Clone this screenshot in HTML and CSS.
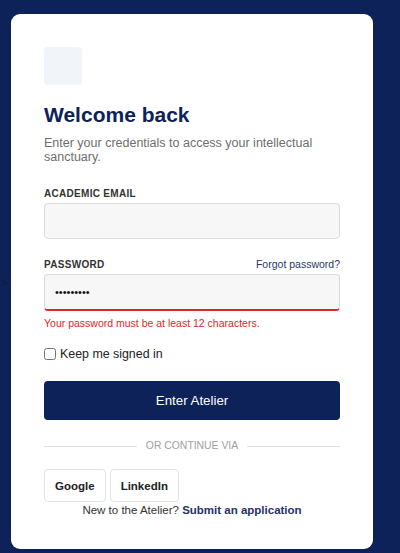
FILE: index.html
```html
<!DOCTYPE html>
<html lang="en">
<head>
<meta charset="utf-8">
<title>Welcome back</title>
<link rel="stylesheet" href="styles.css">
</head>
<body>
<span class="stray">&gt;</span>
<main class="card">
  <div class="logo"></div>
  <h1 class="title">Welcome back</h1>
  <p class="subtitle">Enter your credentials to access your intellectual sanctuary.</p>

  <form class="form">
    <div class="field">
      <label class="label" for="email">Academic Email</label>
      <input class="input" id="email" type="email">
    </div>

    <div class="field field-pw">
      <div class="label-row">
        <label class="label" for="pw">Password</label>
        <a class="forgot" href="#">Forgot password?</a>
      </div>
      <input class="input input-error" id="pw" type="password" value="password1">
      <p class="error">Your password must be at least 12 characters.</p>
    </div>

    <label class="remember"><input type="checkbox" class="check"> Keep me signed in</label>

    <button type="button" class="submit">Enter Atelier</button>
  </form>

  <div class="divider"><span>OR CONTINUE VIA</span></div>

  <div class="socials">
    <button type="button" class="social">Google</button>
    <button type="button" class="social">LinkedIn</button>
  </div>

  <p class="footer">New to the Atelier? <a href="#" class="apply">Submit an application</a></p>
</main>
</body>
</html>
```

FILE: styles.css
```css
* { box-sizing: border-box; }

html, body {
  margin: 0;
}

body {
  background: #0c2259;
  font-family: "Liberation Sans", Arial, sans-serif;
  padding: 14px 27px 4px 11px;
  min-height: 553px;
  position: relative;
}

.stray {
  position: absolute;
  left: 1px;
  top: 276px;
  color: #161a33;
  font-size: 12px;
  line-height: 14px;
}

.card {
  background: #ffffff;
  border-radius: 9px;
  padding: 33px 33px 31px;
  min-height: 535px;
  display: flex;
  flex-direction: column;
}

.card > * { flex-shrink: 0; }

.logo {
  width: 38px;
  height: 38px;
  background: #f1f4f9;
  border-radius: 4px;
}

.title {
  margin: 17px 0 0;
  font-size: 21px;
  line-height: 25px;
  font-weight: 700;
  color: #0e2259;
}

.subtitle {
  margin: 9px 0 0;
  font-size: 12.5px;
  line-height: 14px;
  color: #6e6e6e;
}

.form {
  display: flex;
  flex-direction: column;
  margin-top: 24px;
}

.field {
  display: flex;
  flex-direction: column;
}

.label {
  font-size: 10px;
  line-height: 12px;
  font-weight: 700;
  color: #333333;
  text-transform: uppercase;
  letter-spacing: 0.3px;
}

.label-row {
  display: flex;
  justify-content: space-between;
  align-items: baseline;
}

.forgot {
  font-size: 10.5px;
  line-height: 12px;
  color: #2b3a6e;
  text-decoration: none;
}

.input {
  margin-top: 3px;
  height: 36px;
  width: 100%;
  background: #f7f7f7;
  border: 1px solid #dcdcdc;
  border-radius: 4px;
  padding: 0 10px;
  font-family: inherit;
  font-size: 11px;
  color: #111;
}

.input-error {
  margin-top: 3px;
  height: 37px;
  border-bottom: 2px solid #e0262a;
}

.field-pw {
  margin-top: 19px;
}

.error {
  margin: 6px 0 0;
  font-size: 10.5px;
  line-height: 12px;
  color: #e5262a;
}

.remember {
  margin-top: 18px;
  display: flex;
  align-items: center;
  gap: 4px;
  font-size: 12.4px;
  line-height: 14px;
  color: #222;
}

.check {
  margin: 0;
  width: 12px;
  height: 12px;
}

.submit {
  margin-top: 20px;
  height: 39px;
  background: #0c2259;
  color: #ffffff;
  border: 0;
  border-radius: 4px;
  font-family: inherit;
  font-size: 13.3px;
}

.divider {
  margin-top: 20px;
  display: flex;
  align-items: center;
  gap: 9px;
  color: #a0a0a0;
  font-size: 10.4px;
  line-height: 12px;
}

.divider::before,
.divider::after {
  content: "";
  flex: 1;
  height: 1px;
  background: #e3e3e3;
}

.socials {
  margin-top: 17px;
  display: flex;
  gap: 4px;
}

.social {
  height: 33px;
  padding: 0 10px;
  background: #fff;
  border: 1px solid #e3e3e3;
  border-radius: 4px;
  font-family: inherit;
  font-size: 11.5px;
  font-weight: 700;
  color: #222;
}

.footer {
  margin: 1px 0 0;
  text-align: center;
  font-size: 11.5px;
  line-height: 14px;
  color: #333;
}

.apply {
  color: #26306b;
  font-weight: 700;
  text-decoration: none;
}
```
